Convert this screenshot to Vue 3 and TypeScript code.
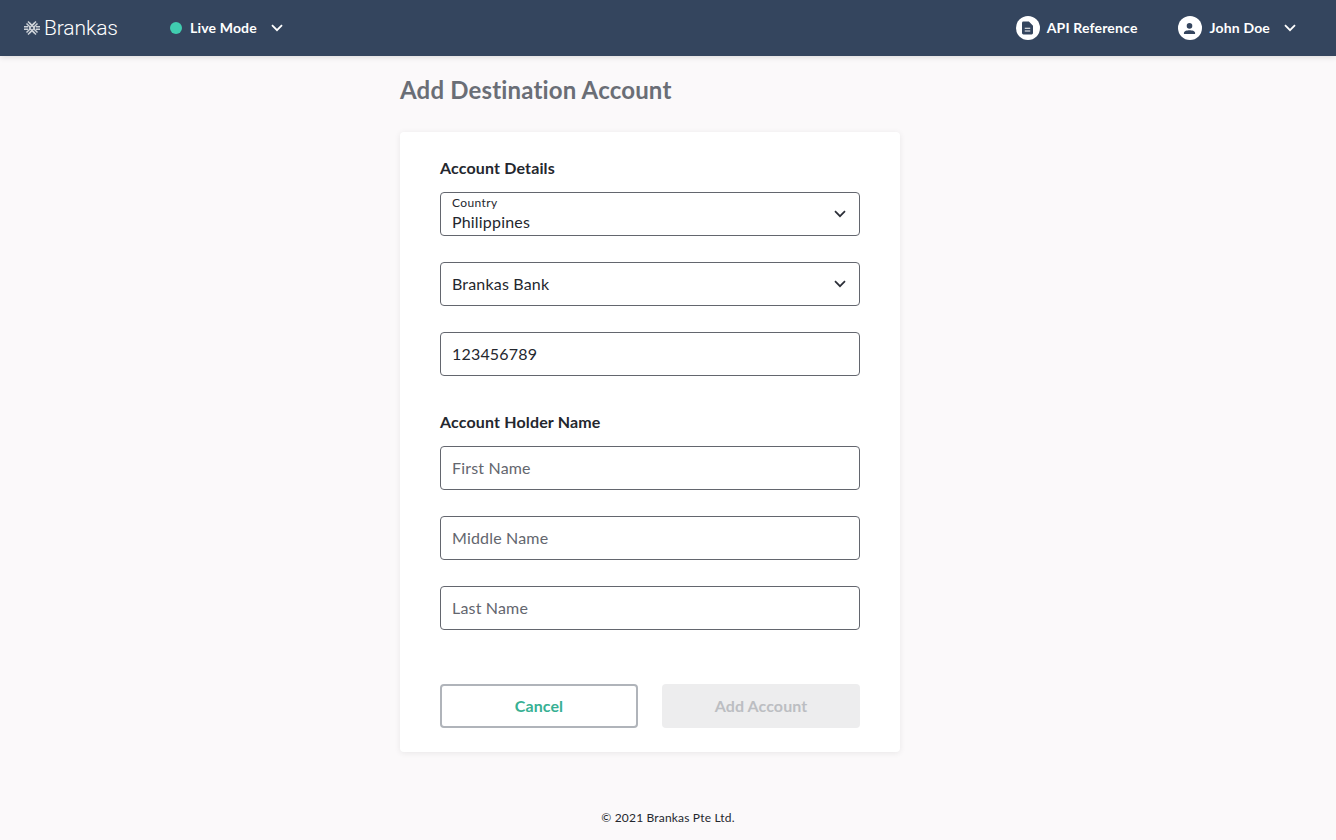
<script setup lang="ts">
const accountFields = [
  { value: '123456789', placeholder: false },
]
const nameFields = ['First Name', 'Middle Name', 'Last Name']
</script>

<template>
  <div class="page">
    <header class="topbar">
      <div class="brand">
        <svg class="logo" viewBox="0 0 16 16" width="16" height="16" aria-hidden="true">
          <g fill="none" stroke="#cdd2d8" stroke-width="1.5">
            <path d="M4 1.5 L8 5.5 L12 1.5" />
            <path d="M2.5 3.5 L6.5 7.5 M13.5 3.5 L9.5 7.5" />
            <path d="M4 14.5 L8 10.5 L12 14.5" />
            <path d="M2.5 12.5 L6.5 8.5 M13.5 12.5 L9.5 8.5" />
            <path d="M5.5 3 L11 8.5 M10.5 3 L5 8.5 M5.5 13 L11 7.5 M10.5 13 L5 7.5" />
            <path d="M0 6.8 H4 M0 9.2 H4 M12 6.8 H16 M12 9.2 H16" />
          </g>
        </svg>
        <span class="brand-name">Brankas</span>
      </div>
      <div class="mode">
        <span class="dot"></span>
        <span class="nav-text">Live Mode</span>
        <svg class="chev" viewBox="0 0 12 8" width="12" height="8" aria-hidden="true">
          <path d="M1 1.2 L6 6.2 L11 1.2" fill="none" stroke="#fff" stroke-width="1.8" />
        </svg>
      </div>
      <div class="spacer"></div>
      <div class="nav-item api">
        <span class="round doc">
          <svg viewBox="0 0 12 14" width="11" height="14" aria-hidden="true">
            <path fill-rule="evenodd" d="M1.5 0 H7.5 L12 4.5 V12.5 A1.5 1.5 0 0 1 10.5 14 H1.5 A1.5 1.5 0 0 1 0 12.5 V1.5 A1.5 1.5 0 0 1 1.5 0 Z M3 6.6 V7.8 H9 V6.6 Z M3 9.6 V10.8 H9 V9.6 Z" fill="#34455e" />
          </svg>
        </span>
        <span class="nav-text">API Reference</span>
      </div>
      <div class="nav-item user">
        <span class="round">
          <svg viewBox="0 0 14 14" width="13" height="13" aria-hidden="true">
            <circle cx="7" cy="4.2" r="3" fill="#34455e" />
            <path d="M1 13 V11.6 C1 9.6 4.4 8.8 7 8.8 C9.6 8.8 13 9.6 13 11.6 V13 Z" fill="#34455e" />
          </svg>
        </span>
        <span class="nav-text">John Doe</span>
        <svg class="chev" viewBox="0 0 12 8" width="12" height="8" aria-hidden="true">
          <path d="M1 1.2 L6 6.2 L11 1.2" fill="none" stroke="#fff" stroke-width="1.8" />
        </svg>
      </div>
    </header>

    <main class="content">
      <h1 class="title">Add Destination Account</h1>
      <section class="card">
        <h2 class="section">Account Details</h2>
        <div class="field select labelled">
          <span class="small-label">Country</span>
          <span class="value">Philippines</span>
          <svg class="sel-chev" viewBox="0 0 12 8" width="12" height="8" aria-hidden="true">
            <path d="M1 1.2 L6 6.2 L11 1.2" fill="none" stroke="#2b2f38" stroke-width="1.7" />
          </svg>
        </div>
        <div class="field select">
          <span class="value">Brankas Bank</span>
          <svg class="sel-chev" viewBox="0 0 12 8" width="12" height="8" aria-hidden="true">
            <path d="M1 1.2 L6 6.2 L11 1.2" fill="none" stroke="#2b2f38" stroke-width="1.7" />
          </svg>
        </div>
        <div v-for="f in accountFields" :key="f.value" class="field">
          <span class="value">{{ f.value }}</span>
        </div>

        <h2 class="section second">Account Holder Name</h2>
        <div v-for="n in nameFields" :key="n" class="field">
          <span class="value placeholder">{{ n }}</span>
        </div>

        <div class="actions">
          <button class="btn cancel" type="button">Cancel</button>
          <button class="btn add" type="button" disabled>Add Account</button>
        </div>
      </section>
      <footer class="foot">© 2021 Brankas Pte Ltd.</footer>
    </main>
  </div>
</template>

<style>
html, body { margin: 0; background: #fbf9fa; }
</style>

<style scoped>
.page {
  min-height: 840px;
  background: #fbf9fa;
  font-family: Lato, "Liberation Sans", sans-serif;
  color: #24272e;
  display: flex;
  flex-direction: column;
}
.topbar {
  height: 56px;
  background: #34455e;
  box-shadow: 0 1px 6px rgba(0, 0, 0, 0.14);
  display: flex;
  align-items: center;
  padding: 0 40px 0 24px;
  box-sizing: border-box;
  flex: none;
}
.brand { display: flex; align-items: center; width: 146px; }
.logo { margin-right: 4px; }
.brand-name {
  font-family: Roboto, "Noto Sans", sans-serif;
  font-weight: 300;
  font-size: 21px;
  letter-spacing: -0.1px;
  color: #fff;
  line-height: 24px;
}
.mode { display: flex; align-items: center; }
.dot { width: 12px; height: 12px; border-radius: 50%; background: #40cdb0; margin-right: 8px; }
.nav-text { color: #fff; font-size: 14px; font-weight: 700; line-height: 20px; letter-spacing: 0.17px; }
.chev { margin-left: 14px; }
.spacer { flex: 1; }
.nav-item { display: flex; align-items: center; }
.round {
  width: 24px; height: 24px; border-radius: 50%; background: #fff;
  display: flex; align-items: center; justify-content: center; margin-right: 8px;
}
.round.doc { margin-right: 7px; }
.api { margin-right: 40px; }
.content { width: 500px; margin-left: 400px; display: flex; flex-direction: column; flex: 1; }
.title {
  margin: 0;
  padding-top: 18px;
  font-size: 24px;
  line-height: 32px;
  font-weight: 700;
  letter-spacing: 0.17px;
  color: #6a6e76;
}
.card {
  margin-top: 26px;
  background: #fff;
  border-radius: 4px;
  box-shadow: 0 1px 6px rgba(0, 0, 0, 0.08);
  padding: 24px 40px;
  box-sizing: border-box;
  height: 620px;
  display: flex;
  flex-direction: column;
}
.section {
  margin: 0 0 12px;
  font-size: 16px;
  line-height: 24px;
  font-weight: 700;
  letter-spacing: 0.15px;
  color: #24272e;
}
.section.second { margin-top: 8px; }
.field {
  position: relative;
  height: 44px;
  flex: none;
  box-sizing: border-box;
  border: 1px solid #63666e;
  border-radius: 4px;
  padding: 0 11px;
  display: flex;
  flex-direction: column;
  justify-content: center;
  margin-bottom: 26px;
}
.small-label { font-size: 12px; line-height: 14px; letter-spacing: 0.38px; color: #24272e; }
.labelled { justify-content: flex-start; padding-top: 3px; }
.value { font-size: 16px; line-height: 24px; letter-spacing: 0.18px; color: #24272e; }
.placeholder { color: #63666e; }
.sel-chev { position: absolute; right: 13px; top: 17px; }
.actions { display: flex; justify-content: space-between; margin-top: 28px; }
.btn {
  flex: none;
  width: 198px;
  height: 44px;
  padding: 0 0 2px;
  border-radius: 4px;
  font-family: inherit;
  font-size: 16px;
  font-weight: 700;
  letter-spacing: 0.1px;
  box-sizing: border-box;
}
.cancel { background: #fff; border: 2px solid #b0b4ba; color: #37b093; }
.add { background: #ededee; border: none; color: #bcbec2; }
.foot {
  margin-top: 57px;
  text-align: center;
  font-size: 12px;
  line-height: 18px;
  letter-spacing: 0.18px;
  color: #24272e;
  width: 664px;
  margin-left: -64px;
}
</style>
